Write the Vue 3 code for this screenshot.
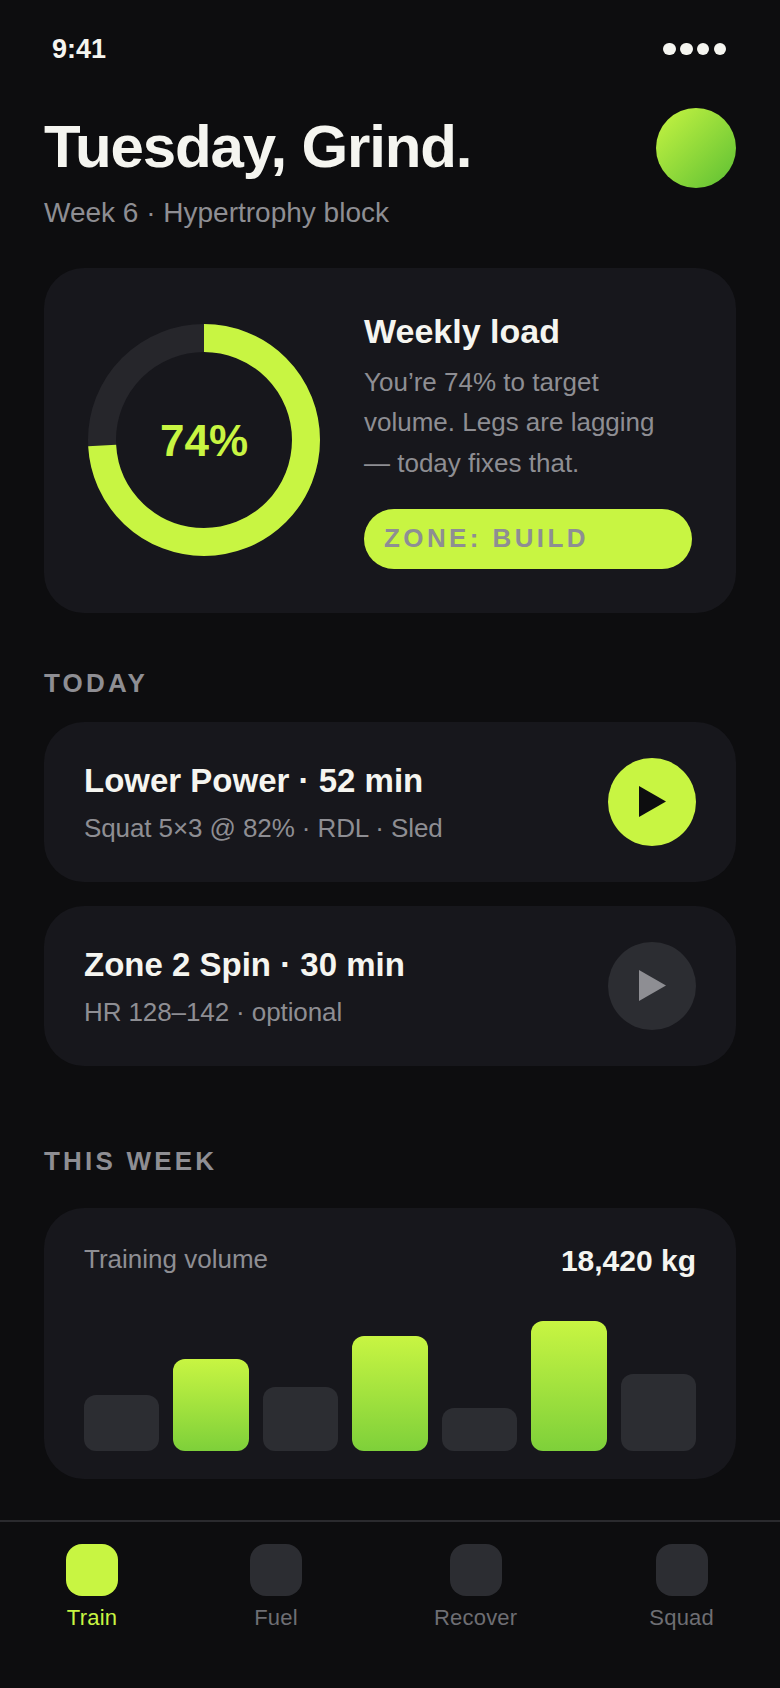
<script setup>
  const bars = [
    { h: 40, on: false },
    { h: 66, on: true },
    { h: 46, on: false },
    { h: 82, on: true },
    { h: 31, on: false },
    { h: 93, on: true },
    { h: 55, on: false },
  ];
  const tabs = ['Train', 'Fuel', 'Recover', 'Squad'];
  const sessions = [
    { title: 'Lower Power · 52 min', sub: 'Squat 5×3 @ 82% · RDL · Sled', active: true },
    { title: 'Zone 2 Spin · 30 min', sub: 'HR 128–142 · optional', active: false },
  ];
  // ring: r 102, 74% of the way round
  const circ = 2 * Math.PI * 102;
</script>

<template>
  <main class="screen">
    <div class="status">
      <span class="time">9:41</span>
      <span class="dots"><i></i><i></i><i></i><i></i></span>
    </div>

    <div class="content">
      <header class="head">
        <div class="head-text">
          <h1>Tuesday, Grind.</h1>
          <p class="week">Week 6 · Hypertrophy block</p>
        </div>
        <div class="avatar"></div>
      </header>

      <section class="card load">
        <div class="ring">
          <svg width="232" height="232" viewBox="0 0 232 232">
            <circle cx="116" cy="116" r="102" fill="none" stroke="#26262b" stroke-width="28" />
            <circle
              cx="116" cy="116" r="102" fill="none" stroke="#c8f542" stroke-width="28"
              :stroke-dasharray="`${circ * 0.74} ${circ}`"
              transform="rotate(-90 116 116)" />
          </svg>
          <span class="ring-label">74%</span>
        </div>
        <div class="load-text">
          <h2>Weekly load</h2>
          <p>You’re 74% to target volume. Legs are lagging — today fixes that.</p>
          <div class="pill">ZONE: BUILD</div>
        </div>
      </section>

      <h3 class="label today">TODAY</h3>
      <div class="sessions">
        <div v-for="s in sessions" :key="s.title" class="card session">
          <div class="session-text">
            <div class="session-title">{{ s.title }}</div>
            <div class="session-sub">{{ s.sub }}</div>
          </div>
          <div class="play" :class="{ on: s.active }">
            <svg width="27" height="31" viewBox="0 0 27 31"><polygon points="0,0 27,15.5 0,31" /></svg>
          </div>
        </div>
      </div>

      <h3 class="label week-label">THIS WEEK</h3>
      <section class="card volume">
        <div class="volume-head">
          <span class="volume-name">Training volume</span>
          <span class="volume-value">18,420 kg</span>
        </div>
        <div class="chart">
          <div
            v-for="(b, i) in bars"
            :key="i"
            class="bar"
            :class="{ on: b.on }"
            :style="{ height: b.h + '%' }"></div>
        </div>
      </section>
    </div>

    <nav class="tabs">
      <div v-for="(t, i) in tabs" :key="t" class="tab" :class="{ on: i === 0 }">
        <div class="tab-icon"></div>
        <span>{{ t }}</span>
      </div>
    </nav>
  </main>
</template>

<style>
  html, body {
    margin: 0;
    background: #0d0d0f;
  }
</style>

<style scoped>
  .screen {
    width: 780px;
    height: 1688px;
    background: #0d0d0f;
    color: #f5f5f0;
    font-family: "Liberation Sans", Arial, sans-serif;
    display: flex;
    flex-direction: column;
    overflow: hidden;
  }
  .status {
    height: 98px;
    box-sizing: border-box;
    padding: 0 54px 0 52px;
    display: flex;
    justify-content: space-between;
    align-items: center;
  }
  .time {
    font-size: 27px;
    font-weight: 700;
  }
  .dots {
    display: flex;
    gap: 4.2px;
  }
  .dots i {
    width: 12.5px;
    height: 12.5px;
    border-radius: 50%;
    background: #f5f5f0;
  }
  .content {
    flex: 1;
    padding: 10px 44px 0;
  }
  .head {
    display: flex;
    justify-content: space-between;
    align-items: flex-start;
  }
  .head-text {
    padding-top: 6px;
  }
  h1 {
    margin: 0;
    font-size: 60px;
    line-height: 66px;
    font-weight: 700;
    letter-spacing: -1.15px;
  }
  .week {
    margin: 16px 0 0;
    font-size: 28px;
    line-height: 34px;
    color: #8e8e93;
  }
  .avatar {
    width: 80px;
    height: 80px;
    border-radius: 50%;
    background: linear-gradient(135deg, #c8f542, #5cbf33);
  }
  .card {
    background: #17171c;
    border-radius: 40px;
  }
  .load {
    margin-top: 38px;
    padding: 44px;
    display: flex;
    align-items: center;
    gap: 44px;
  }
  .ring {
    width: 232px;
    height: 232px;
    flex-shrink: 0;
    position: relative;
  }
  .ring svg {
    display: block;
  }
  .ring-label {
    position: absolute;
    inset: 0;
    padding-top: 2px;
    display: flex;
    align-items: center;
    justify-content: center;
    color: #c8f542;
    font-size: 44px;
    font-weight: 700;
  }
  .load-text {
    flex: 1;
  }
  h2 {
    margin: 0;
    font-size: 34px;
    line-height: 38px;
    font-weight: 700;
  }
  .load-text p {
    margin: 12px 0 0;
    padding-right: 10px;
    font-size: 26px;
    line-height: 40.3px;
    color: #8e8e93;
  }
  .pill {
    margin-top: 26px;
    height: 60px;
    line-height: 58px;
    padding: 0 20px;
    border-radius: 30px;
    background: #c8f542;
    color: #8e8e93;
    font-size: 26px;
    font-weight: 700;
    letter-spacing: 3.4px;
  }
  .label {
    margin: 0;
    font-size: 26px;
    line-height: 28px;
    font-weight: 700;
    letter-spacing: 3.2px;
    color: #8e8e93;
  }
  .today {
    margin-top: 56px;
  }
  .sessions {
    margin-top: 25px;
    display: flex;
    flex-direction: column;
    gap: 24px;
  }
  .session {
    height: 160px;
    box-sizing: border-box;
    padding: 0 40px;
    display: flex;
    align-items: center;
    justify-content: space-between;
  }
  .session-text {
    padding-top: 2px;
  }
  .session-title {
    font-size: 33px;
    line-height: 38px;
    font-weight: 700;
  }
  .session-sub {
    margin-top: 12px;
    font-size: 26px;
    line-height: 32px;
    letter-spacing: -0.1px;
    color: #8e8e93;
  }
  .play {
    width: 88px;
    height: 88px;
    border-radius: 50%;
    background: #2c2d32;
    display: flex;
    align-items: center;
    justify-content: center;
  }
  .play svg {
    fill: #8e8e93;
  }
  .play.on {
    background: #c8f542;
  }
  .play.on svg {
    fill: #0d0d0f;
  }
  .week-label {
    margin-top: 81px;
  }
  .volume {
    margin-top: 33px;
    padding: 36px 40px 28px;
    height: 271px;
    box-sizing: border-box;
    display: flex;
    flex-direction: column;
    justify-content: space-between;
  }
  .volume-head {
    display: flex;
    justify-content: space-between;
    align-items: flex-start;
  }
  .volume-name {
    font-size: 26px;
    color: #8e8e93;
  }
  .volume-value {
    font-size: 30px;
    font-weight: 700;
  }
  .chart {
    height: 140px;
    display: flex;
    align-items: flex-end;
    gap: 14px;
  }
  .bar {
    flex: 1;
    border-radius: 12px;
    background: #2c2d32;
  }
  .bar.on {
    background: linear-gradient(180deg, #c8f542, #7ed03a);
  }
  .tabs {
    height: 168px;
    box-sizing: border-box;
    border-top: 2px solid #2a2a2e;
    padding-top: 22px;
    display: flex;
    justify-content: space-around;
    align-items: flex-start;
  }
  .tab {
    display: flex;
    flex-direction: column;
    align-items: center;
    gap: 8px;
    font-size: 22px;
    line-height: 28px;
    letter-spacing: 0.2px;
    color: #6e6e73;
  }
  .tab.on {
    color: #c8f542;
  }
  .tab-icon {
    width: 52px;
    height: 52px;
    border-radius: 16px;
    background: #2c2d32;
  }
  .tab.on .tab-icon {
    background: #c8f542;
  }
</style>
